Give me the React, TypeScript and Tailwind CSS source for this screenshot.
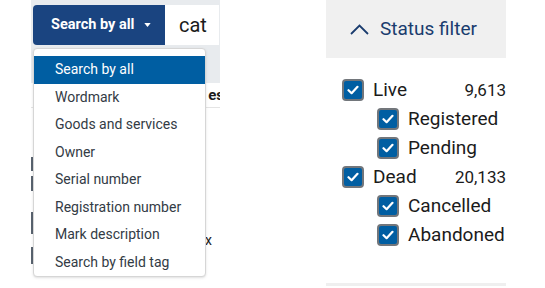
const options = [
  'Search by all',
  'Wordmark',
  'Goods and services',
  'Owner',
  'Serial number',
  'Registration number',
  'Mark description',
  'Search by field tag',
]

type Status = { label: string; count?: string; children: string[] }

const statuses: Status[] = [
  { label: 'Live', count: '9,613', children: ['Registered', 'Pending'] },
  { label: 'Dead', count: '20,133', children: ['Cancelled', 'Abandoned'] },
]

function Check() {
  return (
    <span className="flex h-[22px] w-[22px] shrink-0 items-center justify-center rounded-[4px] border-2 border-[#72767b] bg-[#005ea2]">
      <svg width="12" height="10" viewBox="0 0 12 10" fill="none">
        <path d="M1.5 5.2 4.6 8.2 10.5 1.8" stroke="white" strokeWidth="2.2" strokeLinecap="round" strokeLinejoin="round" />
      </svg>
    </span>
  )
}

export default function App() {
  return (
    <div className="flex h-[288px] w-[545px] overflow-hidden bg-white" style={{ fontFamily: 'Roboto, "Noto Sans", sans-serif' }}>
      {/* Search panel */}
      <div className="relative ml-[31px] w-[189px] overflow-hidden">
        <div className="h-[5px] bg-[#e8ebee]" />
        <div className="flex h-[40px] bg-[#e8ebee] pl-[2px]">
          <button className="flex w-[132px] items-center gap-[10px] rounded-l-[4px] bg-[#1a4480] pl-[18px] text-[14.5px] font-bold text-white">
            Search by all
            <svg width="7" height="4" viewBox="0 0 8 5"><path d="M0 0h8L4 5z" fill="white" /></svg>
          </button>
          <div className="flex w-[54px] items-center bg-white pl-[14px] text-[20px] text-[#1b1b1b]">cat</div>
        </div>
        <div className="h-[38px] bg-[#e8ebee]" />
        <div className="flex h-[25px] items-center justify-end border-b border-[#e4e4e4] text-[15px] font-bold text-[#1b1b1b]">
          <span className="-mr-[4px]">es</span>
        </div>
        {/* results rows peeking out behind the menu */}
        <div className="mt-[49px] flex flex-col">
          <div className="h-[14px] w-[2px] bg-[#5a6470]" />
          <div className="mt-[5px] h-[15px] w-[2px] bg-[#5a6470]" />
          <div className="mt-[21px] h-[22px] w-[2px] bg-[#5a6470]" />
          <div className="mt-[13px] h-[17px] w-[2px] bg-[#5a6470]" />
        </div>
        <span className="absolute left-[174px] top-[230px] text-[14px] text-[#1b1b1b]">x</span>

        {/* Dropdown menu */}
        <ul className="absolute left-[2px] top-[48px] w-[173px] rounded-[4px] border border-[#d6d6d6] bg-white pt-[7px] shadow-sm">
          {options.map((o, i) => (
            <li
              key={o}
              className={`flex h-[27.5px] items-center pl-[21px] text-[14px] ${i === 0 ? 'bg-[#005ea2] text-white' : 'text-[#333b45]'}`}
            >
              {o}
            </li>
          ))}
        </ul>
      </div>

      {/* Status filter */}
      <div className="ml-[106px] flex w-[180px] flex-col">
        <div className="flex h-[58px] items-center gap-[11px] bg-[#f0f0f0] pl-[24px] text-[19px] text-[#1a3c6e]">
          <svg width="19" height="11" viewBox="0 0 19 11" fill="none">
            <path d="M1 10 9.5 1.5 18 10" stroke="currentColor" strokeWidth="1.8" />
          </svg>
          Status filter
        </div>
        <div className="flex flex-col gap-[7px] pl-[16px] pt-[21px] text-[19px] leading-[22px] text-[#1b1b1b]">
          {statuses.map((s) => (
            <div key={s.label} className="flex flex-col gap-[7px]">
              <div className="flex items-center">
                <Check />
                <span className="ml-[9px]">{s.label}</span>
                <span className="ml-auto text-[17px]">{s.count}</span>
              </div>
              {s.children.map((c) => (
                <div key={c} className="ml-[35px] flex items-center">
                  <Check />
                  <span className="ml-[9px]">{c}</span>
                </div>
              ))}
            </div>
          ))}
        </div>
        <div className="mt-auto mb-[2px] h-[3px] bg-[#efefef]" />
      </div>
    </div>
  )
}
